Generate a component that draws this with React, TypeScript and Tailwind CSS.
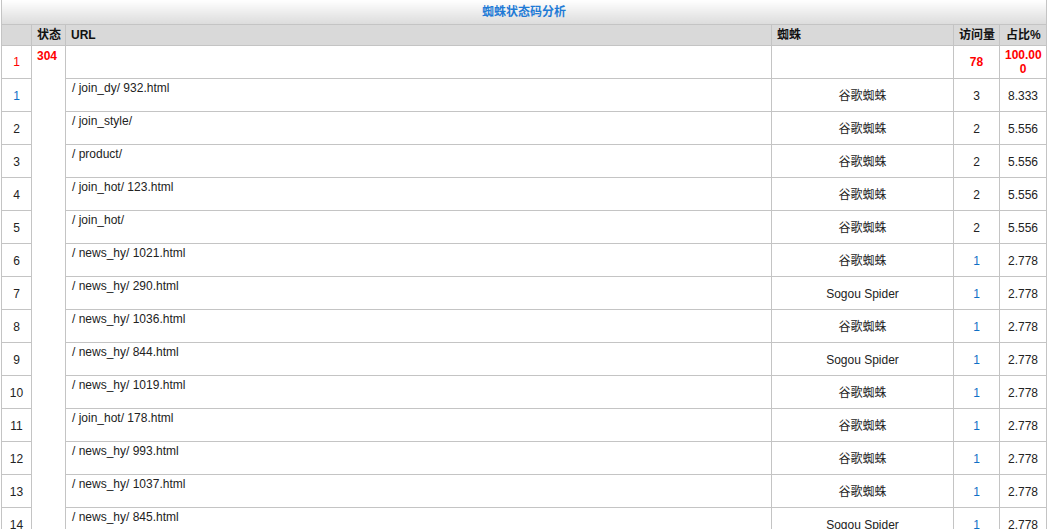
const rows = [
  { url: "/ join_dy/ 932.html", spider: "谷歌蜘蛛", visits: 3, pct: "8.333" },
  { url: "/ join_style/", spider: "谷歌蜘蛛", visits: 2, pct: "5.556" },
  { url: "/ product/", spider: "谷歌蜘蛛", visits: 2, pct: "5.556" },
  { url: "/ join_hot/ 123.html", spider: "谷歌蜘蛛", visits: 2, pct: "5.556" },
  { url: "/ join_hot/", spider: "谷歌蜘蛛", visits: 2, pct: "5.556" },
  { url: "/ news_hy/ 1021.html", spider: "谷歌蜘蛛", visits: 1, pct: "2.778" },
  { url: "/ news_hy/ 290.html", spider: "Sogou Spider", visits: 1, pct: "2.778" },
  { url: "/ news_hy/ 1036.html", spider: "谷歌蜘蛛", visits: 1, pct: "2.778" },
  { url: "/ news_hy/ 844.html", spider: "Sogou Spider", visits: 1, pct: "2.778" },
  { url: "/ news_hy/ 1019.html", spider: "谷歌蜘蛛", visits: 1, pct: "2.778" },
  { url: "/ join_hot/ 178.html", spider: "谷歌蜘蛛", visits: 1, pct: "2.778" },
  { url: "/ news_hy/ 993.html", spider: "谷歌蜘蛛", visits: 1, pct: "2.778" },
  { url: "/ news_hy/ 1037.html", spider: "谷歌蜘蛛", visits: 1, pct: "2.778" },
  { url: "/ news_hy/ 845.html", spider: "Sogou Spider", visits: 1, pct: "2.778" },
];

const cell = "border border-[#c4c4c4] px-[5px] align-middle";
const head = "border border-[#c4c4c4] pl-[5px] pr-0 text-left align-middle font-bold whitespace-nowrap text-[#111]";

export default function App() {
  return (
    <div
      className="h-[529px] overflow-hidden bg-white pl-px text-[12px] leading-[14px] text-[#222]"
      style={{ fontFamily: '"Liberation Sans", Arial, "Noto Sans CJK SC", sans-serif' }}
    >
      <table className="w-[1045px] table-fixed border-collapse">
        <colgroup>
          <col className="w-[30px]" />
          <col className="w-[34px]" />
          <col className="w-[706px]" />
          <col className="w-[182px]" />
          <col className="w-[46px]" />
          <col className="w-[47px]" />
        </colgroup>
        <thead>
          <tr className="h-[24px]">
            <th
              colSpan={6}
              className="border border-t-0 border-[#c4c4c4] bg-gradient-to-b from-white to-[#dcdcdc] text-center align-middle font-bold text-[#1f7bd6]"
            >
              蜘蛛状态码分析
            </th>
          </tr>
          <tr className="h-[21px] bg-[#d9d9d9]">
            <th className={head}></th>
            <th className={head}>状态</th>
            <th className={head}>URL</th>
            <th className={head}>蜘蛛</th>
            <th className={`${head} pl-[4px]`}>访问量</th>
            <th className={`${head} pl-[6px]`}>占比%</th>
          </tr>
        </thead>
        <tbody>
          <tr className="h-[33px]">
            <td className={`${cell} text-center text-[#f00]`}>1</td>
            <td
              rowSpan={rows.length + 1}
              className="border border-[#c4c4c4] px-[5px] pt-[3px] align-top font-bold text-[#f00]"
            >
              304
            </td>
            <td className={cell}></td>
            <td className={cell}></td>
            <td className={`${cell} text-center font-bold text-[#f00]`}>78</td>
            <td className={`${cell} px-[2px] pt-[1px] text-center font-bold text-[#f00]`}>
              100.00
              <br />0
            </td>
          </tr>
          {rows.map((r, i) => (
            <tr key={i} className="h-[33px]">
              <td className={`${cell} pt-[2px] text-center ${i === 0 ? "text-[#0f6fc6]" : "text-[#222]"}`}>
                {i + 1}
              </td>
              <td className="border border-[#c4c4c4] px-[6px] pt-[2px] align-top">{r.url}</td>
              <td className={`${cell} pt-[2px] text-center`}>{r.spider}</td>
              <td className={`${cell} pt-[2px] text-center ${r.visits === 1 ? "text-[#0f6fc6]" : "text-[#222]"}`}>
                {r.visits}
              </td>
              <td className={`${cell} pt-[2px] px-[4px] text-center`}>{r.pct}</td>
            </tr>
          ))}
        </tbody>
      </table>
    </div>
  );
}
